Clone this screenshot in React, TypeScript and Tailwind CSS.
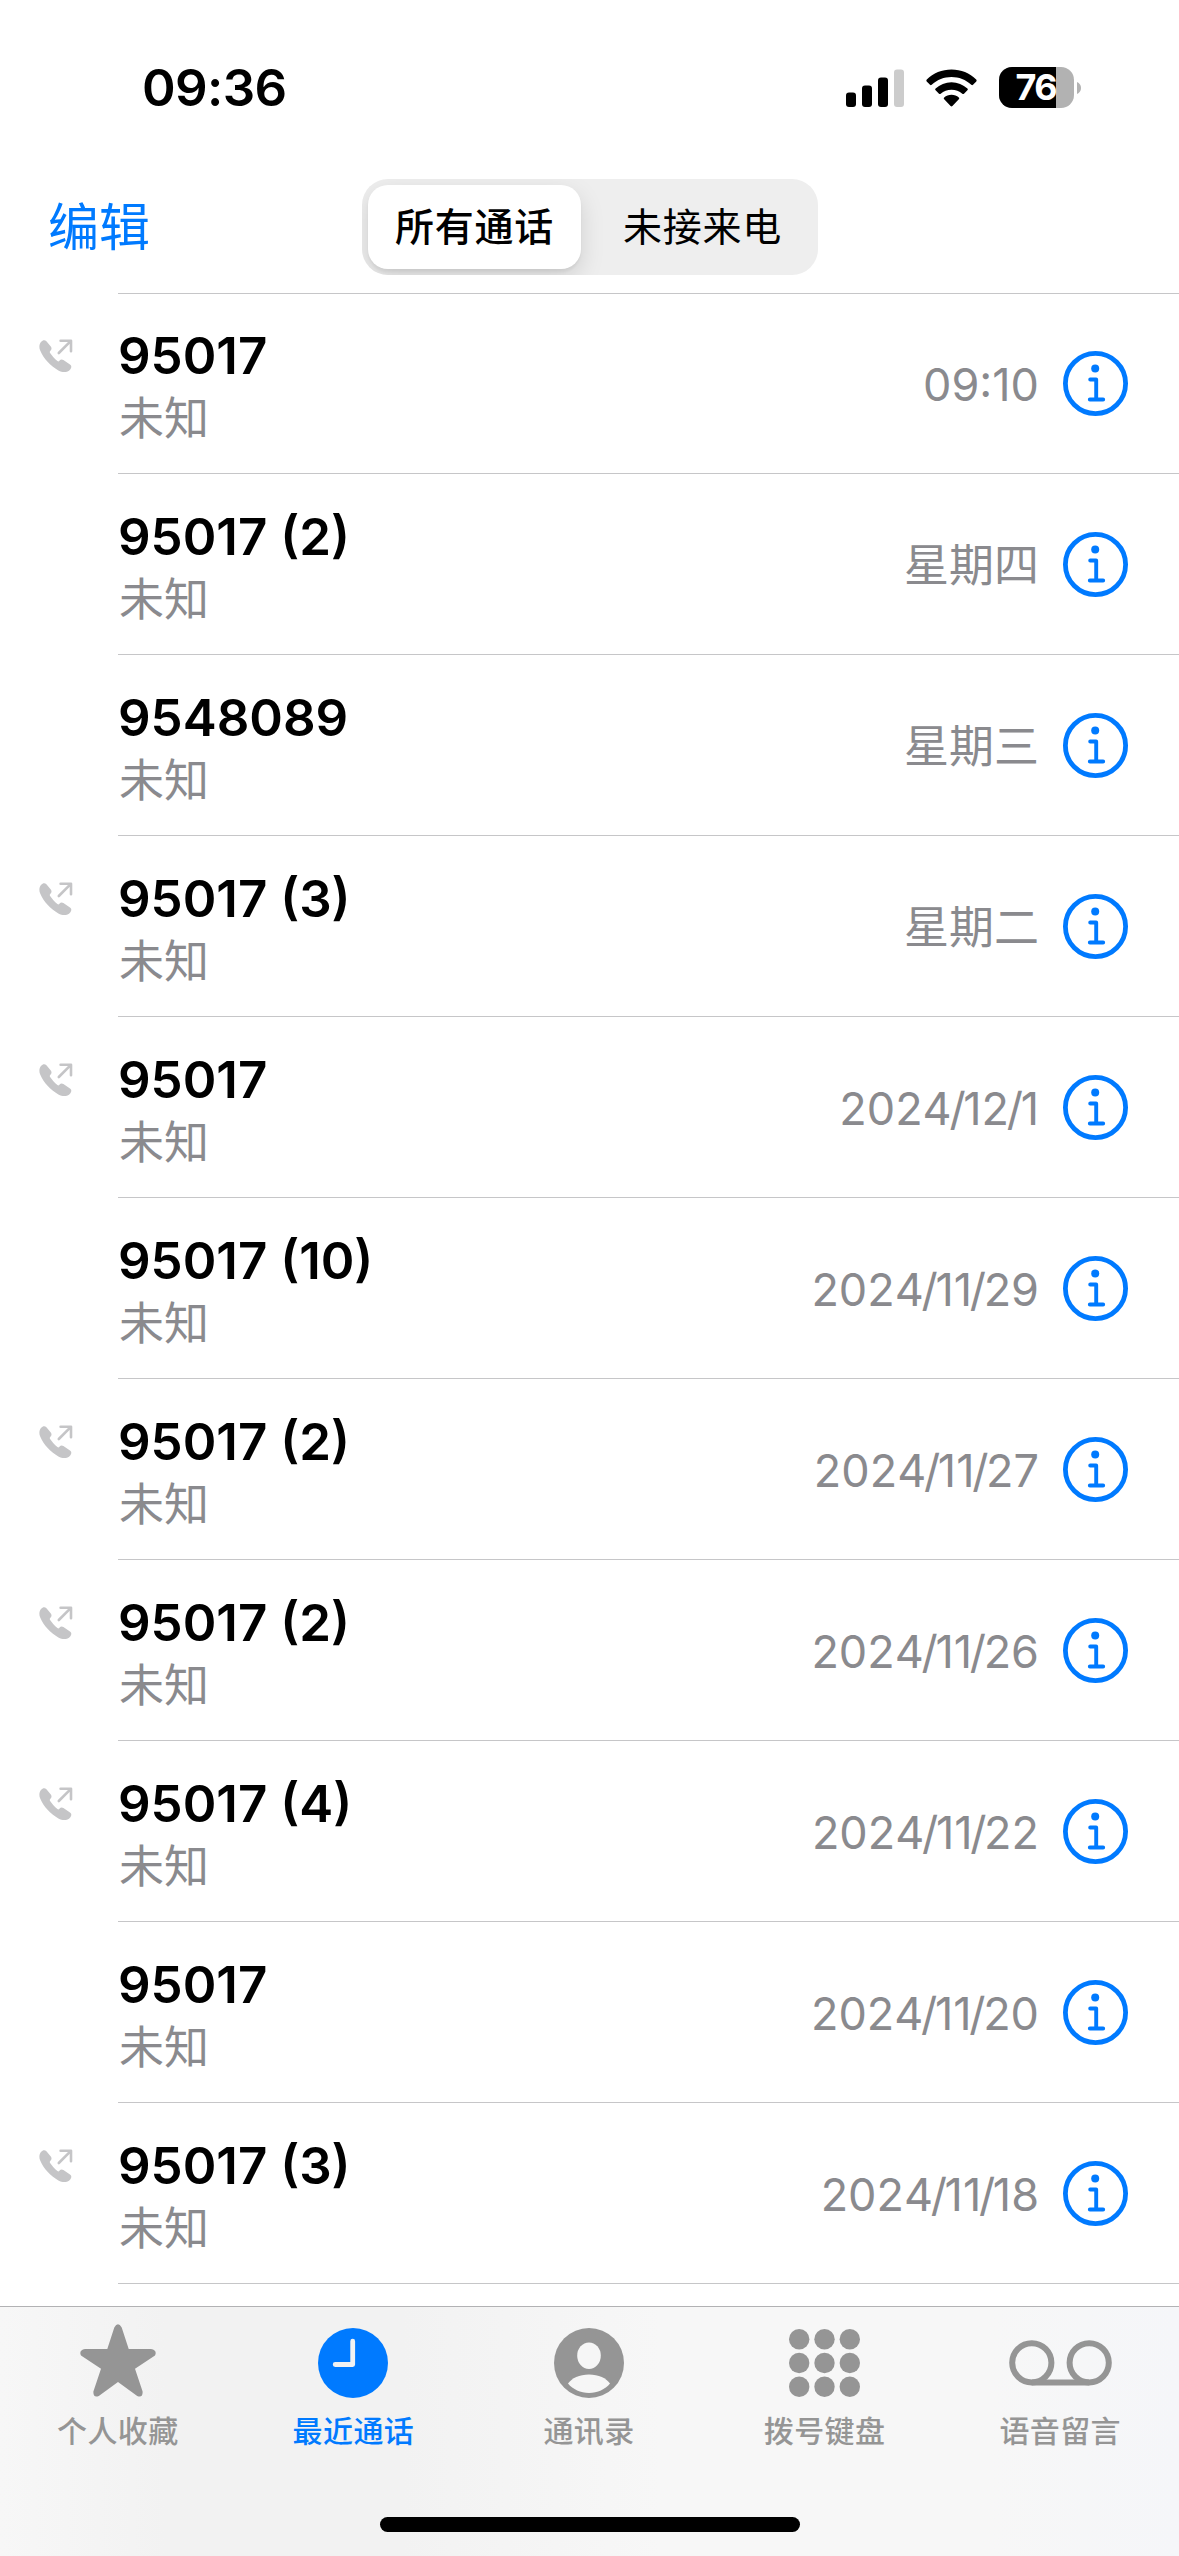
import { Fragment, useState } from 'react';
import type { ReactNode } from 'react';
import clsx from 'clsx';

interface Call {
  id: number;
  number: string;
  date: string;
  outgoing?: boolean;
}

const calls: Call[] = [
  { id: 1, number: '95017', date: '09:10', outgoing: true },
  { id: 2, number: '95017 (2)', date: '星期四' },
  { id: 3, number: '9548089', date: '星期三' },
  { id: 4, number: '95017 (3)', date: '星期二', outgoing: true },
  { id: 5, number: '95017', date: '2024/12/1', outgoing: true },
  { id: 6, number: '95017 (10)', date: '2024/11/29' },
  { id: 7, number: '95017 (2)', date: '2024/11/27', outgoing: true },
  { id: 8, number: '95017 (2)', date: '2024/11/26', outgoing: true },
  { id: 9, number: '95017 (4)', date: '2024/11/22', outgoing: true },
  { id: 10, number: '95017', date: '2024/11/20' },
  { id: 11, number: '95017 (3)', date: '2024/11/18', outgoing: true },
];

const OutgoingIcon = () => (
  <svg width="34" height="34" viewBox="0 0 34 34" className="text-[#c5c5c7]">
    <path
      d="M2.2 2.8 C3.6 1.1 5.8 .6 7.4 2.2 L11.8 7.6 C13 9.3 12.6 10.6 11.4 11.8 C10.6 12.6 10.6 13.2 11.1 14 C13 16.8 15.6 19.6 18.4 22 C19.2 22.6 19.8 22.5 20.4 21.8 C21.6 20.5 22.8 20.1 24.4 21.1 L31 25.6 C32.8 26.9 32.7 28.6 31.2 30.4 C28.6 33.4 24.2 34 19.4 31.4 C11.4 27 4.6 19.8 1.2 11.6 C-.2 8.2 .2 5 2.2 2.8 Z"
      fill="currentColor"
    />
    <path d="M19.8 14 L31.4 2.4 M21.6 1.8 H32 V12.2" fill="none" stroke="currentColor" strokeWidth="2.6" strokeLinecap="round" strokeLinejoin="round" />
  </svg>
);

const InfoIcon = () => (
  <svg width="65" height="65" viewBox="0 0 65 65" fill="none" stroke="currentColor" strokeLinecap="round">
    <circle cx="32.5" cy="32.5" r="30.1" strokeWidth="4.8" />
    <circle cx="32.2" cy="17.4" r="4" fill="currentColor" stroke="none" />
    <path d="M27.2 28.5 H33.2 V48.2 M26.8 48.5 H40.2" strokeWidth="3.9" strokeLinejoin="round" />
  </svg>
);

const StatusBar = () => (
  <div className="flex h-[179px] items-start justify-between pl-[142px] pr-[98px] pt-[67px]">
    <span className="text-[51px] font-semibold leading-[42px] tracking-[-0.6px]">09:36</span>
    <div className="flex items-center">
      <svg width="58" height="38" viewBox="0 0 58 38">
        <rect x="0" y="23.5" width="10" height="14.5" rx="3" />
        <rect x="16" y="16.5" width="10" height="21.5" rx="3" />
        <rect x="32" y="8.5" width="10" height="29.5" rx="3" />
        <rect x="48" y="0.5" width="10" height="37.5" rx="3" fill="#cccccc" />
      </svg>
      <svg className="ml-[22px]" width="51" height="38" viewBox="0 0 51 38">
        <path d="M25.5 .6 C35 .6 43.8 4.2 50.2 10.6 C50.8 11.2 50.8 11.8 50.3 12.4 L47 15.8 C46.5 16.3 45.9 16.3 45.3 15.8 C39.8 10.8 32.9 8.1 25.5 8.1 C18.1 8.1 11.2 10.8 5.7 15.8 C5.1 16.3 4.5 16.3 4 15.8 L.7 12.4 C.2 11.8 .2 11.2 .8 10.6 C7.2 4.2 16 .6 25.5 .6 Z" />
        <path d="M25.5 13.2 C31.6 13.2 37.1 15.5 41.4 19.5 C42 20.1 42 20.7 41.4 21.3 L38 24.7 C37.5 25.2 36.9 25.2 36.3 24.7 C33.4 22.2 29.6 20.7 25.5 20.7 C21.4 20.7 17.6 22.2 14.7 24.7 C14.1 25.2 13.5 25.2 13 24.7 L9.6 21.3 C9 20.7 9 20.1 9.6 19.5 C13.9 15.5 19.4 13.2 25.5 13.2 Z" />
        <path d="M25.5 25.8 C28.3 25.8 30.9 26.7 32.8 28.4 C33.4 28.9 33.4 29.6 32.8 30.2 L26.4 37 C25.8 37.6 25.2 37.6 24.6 37 L18.2 30.2 C17.6 29.6 17.6 28.9 18.2 28.4 C20.1 26.7 22.7 25.8 25.5 25.8 Z" />
      </svg>
      <div className="ml-[22px] flex h-[41px] w-[75px] rounded-[13px] bg-[#b2b2b2]">
        <div className="flex w-[57px] items-center justify-end rounded-l-[13px] bg-black text-[36px] font-bold leading-[41px] tracking-[-1.6px] text-white">
          76
        </div>
      </div>
      <svg className="ml-[3px]" width="4" height="12" viewBox="0 0 4 12">
        <path d="M0 0 C2.6 1 4 3.4 4 6 C4 8.6 2.6 11 0 12 Z" fill="#b2b2b2" />
      </svg>
    </div>
  </div>
);

interface SegmentProps {
  label: string;
  active: boolean;
  onClick: () => void;
}

const Segment = ({ label, active, onClick }: SegmentProps) => (
  <button
    onClick={onClick}
    className={clsx(
      'w-[213px] rounded-[20px] text-center text-[39px] leading-[84px] tracking-[0.8px]',
      active ? 'bg-white font-medium shadow-[0_9px_24px_rgba(0,0,0,0.13),0_3px_3px_rgba(0,0,0,0.05)]' : 'font-normal'
    )}
  >
    {label}
  </button>
);

// 日期里的斜杠比数字排得更紧
const CallDate = ({ value }: { value: string }) => (
  <span className="pt-[3px] text-[45px] text-[#8a8a8e] [font-kerning:none]">
    {value.split('/').map((part, i) => (
      <Fragment key={i}>
        {i > 0 && <span className="-mx-[2.3px]">/</span>}
        {part}
      </Fragment>
    ))}
  </span>
);

const CallRow = ({ call, first }: { call: Call; first: boolean }) => (
  <li className="flex h-[181px]">
    <div className="w-[118px] shrink-0 pl-[39px] pt-[46px]">{call.outgoing && <OutgoingIcon />}</div>
    <div className={clsx('flex flex-1 justify-between border-b border-[#c6c6c8] pr-[51px]', first && 'border-t')}>
      <div className={first ? 'pt-[31px]' : 'pt-8'}>
        <p className="text-[51px] font-semibold leading-[62px]">{call.number}</p>
        <p className="pl-px pt-px text-[45px] leading-[61px] text-[#8a8a8e]">未知</p>
      </div>
      <div className="flex items-center gap-6">
        <CallDate value={call.date} />
        <button className="text-[#007aff]" aria-label="详情">
          <InfoIcon />
        </button>
      </div>
    </div>
  </li>
);

const StarIcon = () => (
  <svg width="76" height="74" viewBox="0 0 76 74" fill="currentColor">
    <path d="M34.3 3.4 Q38 -3 41.7 3.4 L48.7 25 H71 Q77.5 26.2 75 31.6 L55 44.8 L62.6 67.5 Q63 74.2 57.2 72 L38 58 L18.8 72 Q13 74.2 13.4 67.5 L21 44.8 L1 31.6 Q-1.5 26.2 5 25 H27.3 Z" />
  </svg>
);

const ClockIcon = () => (
  <svg width="70" height="70" viewBox="0 0 70 70">
    <circle cx="35" cy="35" r="35" fill="currentColor" />
    <path d="M34.7 13.2 V36.5 H17.2" fill="none" stroke="#f2f2f2" strokeWidth="4.8" strokeLinecap="round" strokeLinejoin="round" />
  </svg>
);

const PersonIcon = () => (
  <svg width="70" height="70" viewBox="0 0 70 70">
    <circle cx="35" cy="35" r="35" fill="currentColor" />
    <ellipse cx="35" cy="27.7" rx="11.8" ry="13.2" fill="#f6f6f6" />
    <path d="M14 55.6 C17.5 50 25.5 46.4 35 46.4 C44.5 46.4 52.5 50 56 55.6 C51 61.6 43.6 65 35 65 C26.4 65 19 61.6 14 55.6 Z" fill="#f6f6f6" />
  </svg>
);

const KeypadIcon = () => (
  <svg width="71" height="68" viewBox="0 0 71 68" fill="currentColor">
    {[10.2, 34, 57.8].map((cy) =>
      [10.2, 35.5, 60.8].map((cx) => <circle key={`${cx}-${cy}`} cx={cx} cy={cy} r="10.2" />)
    )}
  </svg>
);

const VoicemailIcon = () => (
  <svg width="103" height="46" viewBox="0 0 103 46" fill="none" stroke="currentColor" strokeWidth="6">
    <circle cx="22.8" cy="22.8" r="19.6" />
    <circle cx="80.2" cy="22.8" r="19.6" />
    <path d="M22.8 42.4 H80.2" />
  </svg>
);

const tabs: { label: string; icon: ReactNode }[] = [
  { label: '个人收藏', icon: <StarIcon /> },
  { label: '最近通话', icon: <ClockIcon /> },
  { label: '通讯录', icon: <PersonIcon /> },
  { label: '拨号键盘', icon: <KeypadIcon /> },
  { label: '语音留言', icon: <VoicemailIcon /> },
];

const TabBar = () => {
  const [current, setCurrent] = useState('最近通话');

  return (
    <nav className="flex h-[250px] flex-col border-t border-[#b2b2b4] bg-[linear-gradient(90deg,#f7f7f7_0%,#f2f2f2_14%,#f2f2f2_34%,#f7f7f7_56%,#f7f7f7_84%,#f5f6f9_100%)]">
      <div className="grid grid-cols-5 pr-px pt-[17px]">
        {tabs.map((tab) => (
          <button
            key={tab.label}
            onClick={() => setCurrent(tab.label)}
            className={clsx('flex flex-col items-center', tab.label === current ? 'text-[#007aff]' : 'text-[#959595]')}
          >
            <span className={clsx('flex h-[74px] items-center', tab.label !== '个人收藏' && 'pt-[3px]')}>{tab.icon}</span>
            <span className="pt-[13px] text-[30px] font-medium leading-[40px] tracking-[0.4px]">{tab.label}</span>
          </button>
        ))}
      </div>
      <div className="mx-auto mt-auto mb-6 h-[15px] w-[420px] rounded-full bg-black" />
    </nav>
  );
};

export default function App() {
  const [filter, setFilter] = useState<'all' | 'missed'>('all');

  return (
    <div className="flex h-[2556px] w-[1179px] flex-col overflow-hidden bg-white font-[Inter,'Noto_Sans_CJK_SC',sans-serif] text-black">
      <StatusBar />

      {/* 编辑 + 分段控件 */}
      <header className="grid h-[114px] grid-cols-[362px_456px_1fr] items-start">
        <button className="h-24 pl-[48px] pt-px text-left text-[51px] leading-[96px] text-[#007aff]">编辑</button>
        <div className="flex h-24 gap-[15px] overflow-hidden rounded-[26px] bg-[#eeeeee] p-1.5">
          <Segment label="所有通话" active={filter === 'all'} onClick={() => setFilter('all')} />
          <Segment label="未接来电" active={filter === 'missed'} onClick={() => setFilter('missed')} />
        </div>
      </header>

      <ul className="flex-1">
        {calls.map((call, i) => (
          <CallRow key={call.id} call={call} first={i === 0} />
        ))}
      </ul>

      <TabBar />
    </div>
  );
}
